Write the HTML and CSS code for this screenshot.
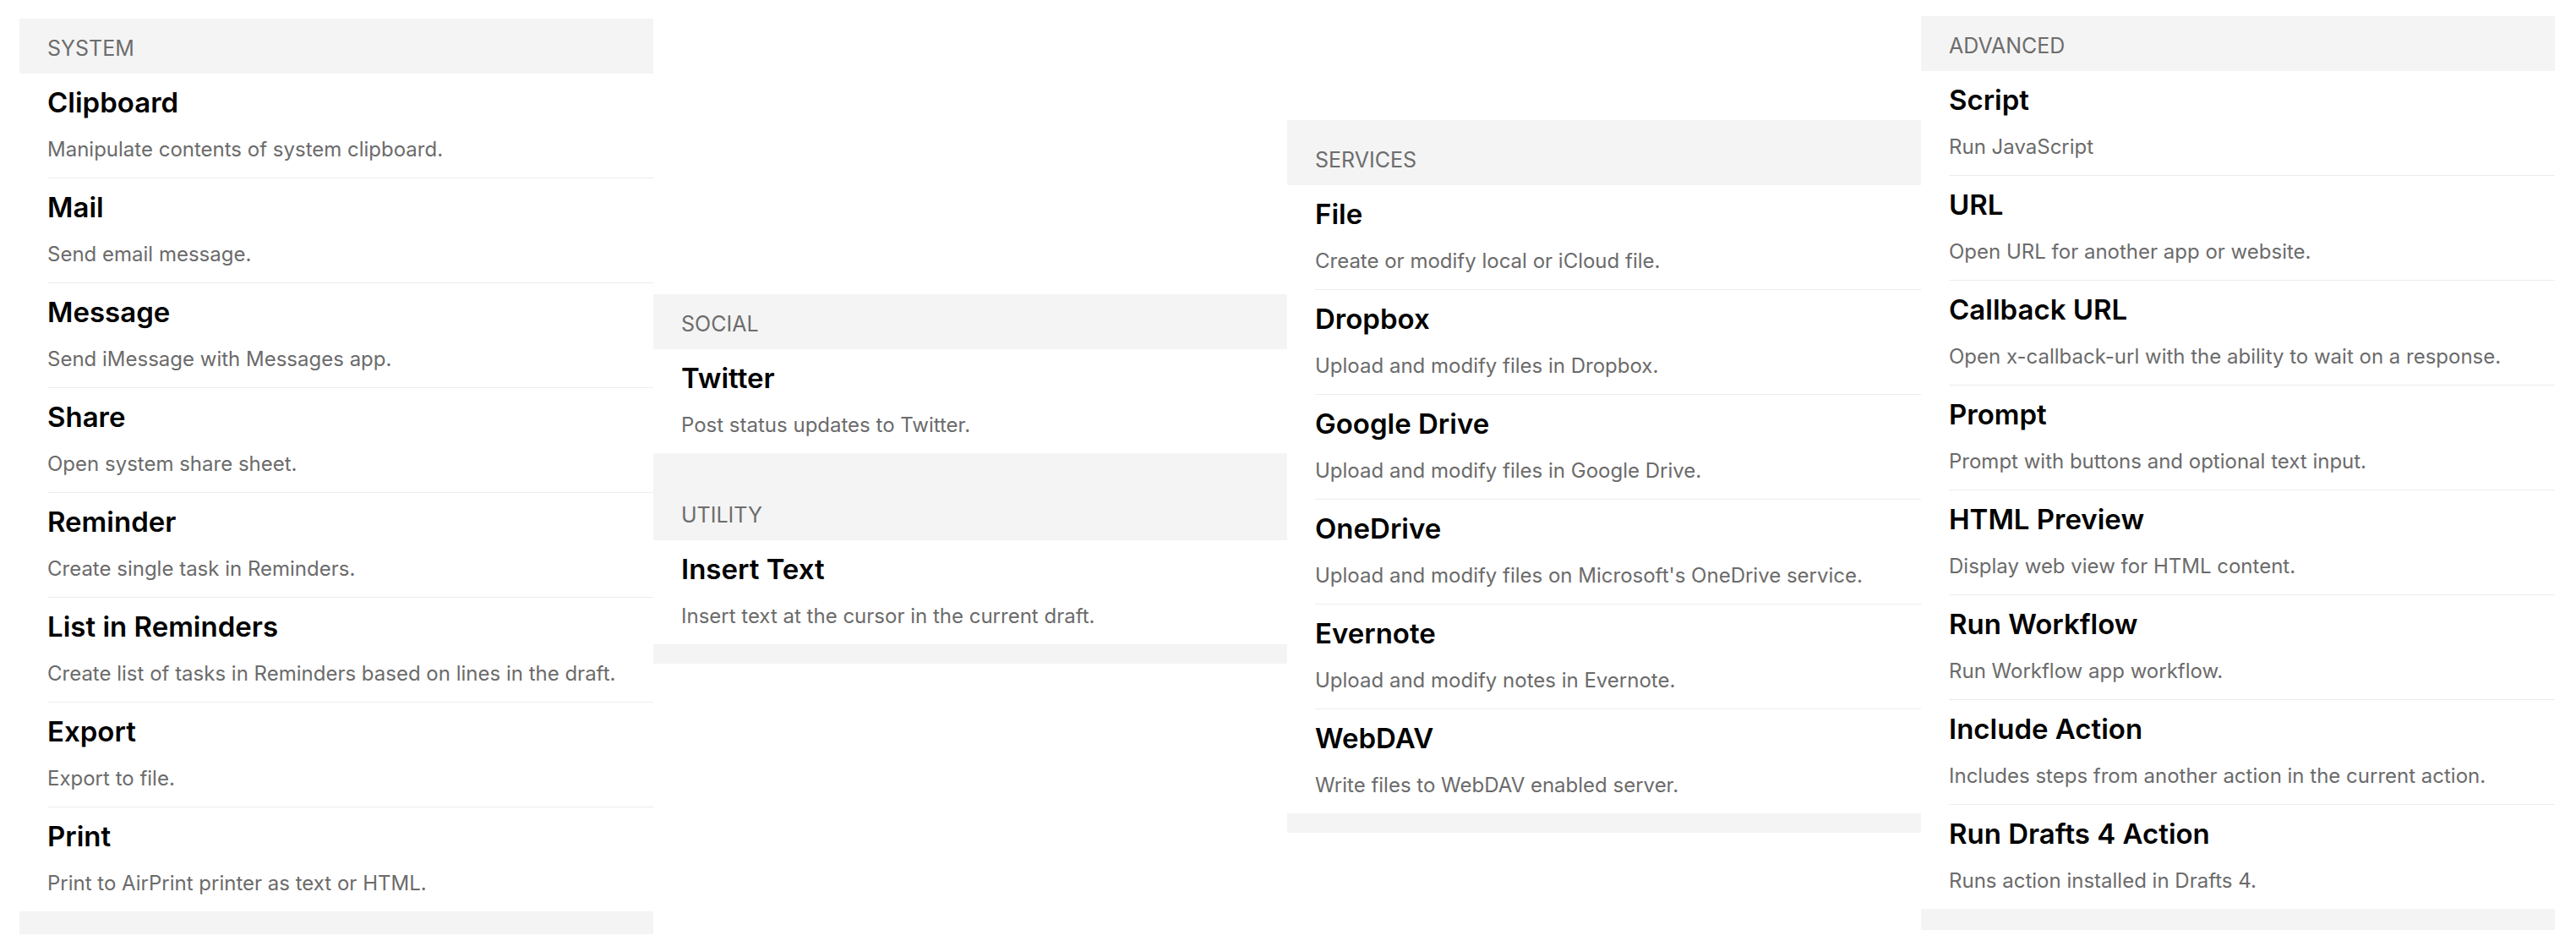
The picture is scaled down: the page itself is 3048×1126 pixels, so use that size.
FILE: index.html
```html
<!DOCTYPE html>
<html lang="en">
<head>
<meta charset="utf-8">
<title>Actions</title>
<link rel="stylesheet" href="styles.css">
</head>
<body>
<main class="board">
  <section class="col">
    <div class="band head">SYSTEM</div>
    <div class="item"><div class="title">Clipboard</div><div class="desc">Manipulate contents of system clipboard.</div></div>
    <div class="item"><div class="title">Mail</div><div class="desc">Send email message.</div></div>
    <div class="item"><div class="title">Message</div><div class="desc">Send iMessage with Messages app.</div></div>
    <div class="item"><div class="title">Share</div><div class="desc">Open system share sheet.</div></div>
    <div class="item"><div class="title">Reminder</div><div class="desc">Create single task in Reminders.</div></div>
    <div class="item"><div class="title">List in Reminders</div><div class="desc">Create list of tasks in Reminders based on lines in the draft.</div></div>
    <div class="item"><div class="title">Export</div><div class="desc">Export to file.</div></div>
    <div class="item last"><div class="title">Print</div><div class="desc">Print to AirPrint printer as text or HTML.</div></div>
    <div class="band foot foot-lg"></div>
  </section>

  <section class="col col-social">
    <div class="band head">SOCIAL</div>
    <div class="item last"><div class="title">Twitter</div><div class="desc">Post status updates to Twitter.</div></div>
    <div class="band head head-joined">UTILITY</div>
    <div class="item last"><div class="title">Insert Text</div><div class="desc">Insert text at the cursor in the current draft.</div></div>
    <div class="band foot"></div>
  </section>

  <section class="col col-services">
    <div class="band head head-tall">SERVICES</div>
    <div class="item"><div class="title">File</div><div class="desc">Create or modify local or iCloud file.</div></div>
    <div class="item"><div class="title">Dropbox</div><div class="desc">Upload and modify files in Dropbox.</div></div>
    <div class="item"><div class="title">Google Drive</div><div class="desc">Upload and modify files in Google Drive.</div></div>
    <div class="item"><div class="title">OneDrive</div><div class="desc">Upload and modify files on Microsoft's OneDrive service.</div></div>
    <div class="item"><div class="title">Evernote</div><div class="desc">Upload and modify notes in Evernote.</div></div>
    <div class="item last"><div class="title">WebDAV</div><div class="desc">Write files to WebDAV enabled server.</div></div>
    <div class="band foot"></div>
  </section>

  <section class="col col-advanced">
    <div class="band head">ADVANCED</div>
    <div class="item"><div class="title">Script</div><div class="desc">Run JavaScript</div></div>
    <div class="item"><div class="title">URL</div><div class="desc">Open URL for another app or website.</div></div>
    <div class="item"><div class="title">Callback URL</div><div class="desc">Open x-callback-url with the ability to wait on a response.</div></div>
    <div class="item"><div class="title">Prompt</div><div class="desc">Prompt with buttons and optional text input.</div></div>
    <div class="item"><div class="title">HTML Preview</div><div class="desc">Display web view for HTML content.</div></div>
    <div class="item"><div class="title">Run Workflow</div><div class="desc">Run Workflow app workflow.</div></div>
    <div class="item"><div class="title">Include Action</div><div class="desc">Includes steps from another action in the current action.</div></div>
    <div class="item last"><div class="title">Run Drafts 4 Action</div><div class="desc">Runs action installed in Drafts 4.</div></div>
    <div class="band foot foot-md"></div>
  </section>
</main>
</body>
</html>
```

FILE: styles.css
```css
html, body {
  margin: 0;
  padding: 0;
  background: #ffffff;
}

body {
  font-family: "Inter", "Roboto", "Noto Sans", sans-serif;
  -webkit-font-smoothing: antialiased;
}

.board {
  display: flex;
  align-items: center;
  height: 1126px;
  padding-left: 23px;
  box-sizing: border-box;
}

.col {
  width: 750px;
  flex: 0 0 750px;
  display: flex;
  flex-direction: column;
}

.col-social {
  margin-top: 6px;
}

.col-services {
  margin-top: 0;
}

.col-advanced {
  margin-bottom: 8px;
}

.band {
  background: #f4f4f4;
}

.head {
  padding: 20px 0 15px 33px;
  font-size: 25px;
  line-height: 30px;
  color: #6d6d6d;
  font-weight: 400;
}

.head-tall {
  padding-top: 32px;
}

.head-joined {
  padding-top: 58px;
}

.foot {
  height: 23px;
}

.foot-md {
  height: 25px;
}

.foot-lg {
  height: 27px;
}

.item {
  margin-left: 33px;
  padding: 14px 0 18px 0;
  border-bottom: 1px solid #ececec;
}

.item.last {
  border-bottom: none;
}

.title {
  font-size: 33px;
  line-height: 40px;
  font-weight: 600;
  color: #000000;
  margin-bottom: 21px;
}

.desc {
  font-size: 24px;
  line-height: 30px;
  color: #6b6b6b;
}
```
